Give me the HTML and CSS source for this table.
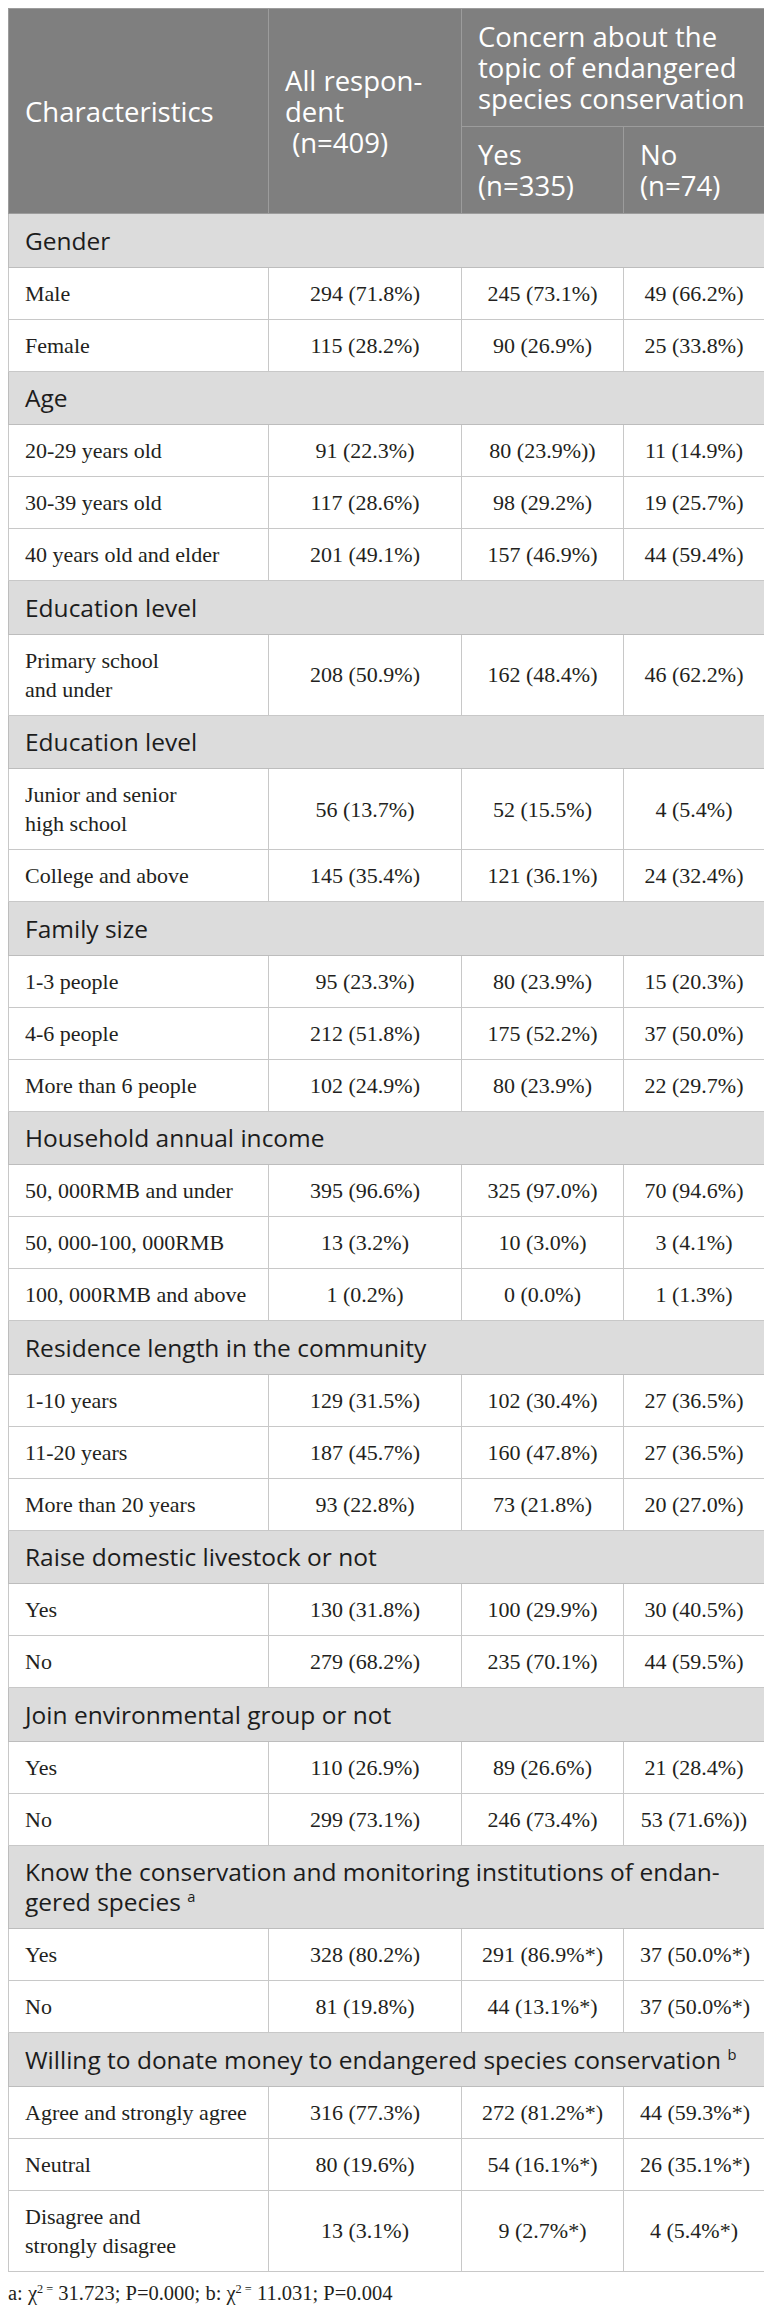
FILE: index.html
```html
<!DOCTYPE html>
<html lang="en">
<head>
<meta charset="utf-8">
<title>Characteristics of respondents</title>
<link rel="stylesheet" href="styles.css">
</head>
<body>
<table class="data">
  <colgroup>
    <col class="c1"><col class="c2"><col class="c3"><col class="c4">
  </colgroup>
  <thead>
    <tr>
      <th rowspan="2" class="h-main">Characteristics</th>
      <th rowspan="2" class="h-main">All respon-<br>dent<br>&nbsp;(n=409)</th>
      <th colspan="2" class="h-group">Concern about the<br>topic of endangered<br>species conservation</th>
    </tr>
    <tr>
      <th class="h-sub">Yes<br>(n=335)</th>
      <th class="h-sub">No<br>(n=74)</th>
    </tr>
  </thead>
  <tbody>
    <tr class="sec"><td colspan="4">Gender</td></tr>
    <tr><td>Male</td><td>294 (71.8%)</td><td>245 (73.1%)</td><td>49 (66.2%)</td></tr>
    <tr><td>Female</td><td>115 (28.2%)</td><td>90 (26.9%)</td><td>25 (33.8%)</td></tr>

    <tr class="sec"><td colspan="4">Age</td></tr>
    <tr><td>20-29 years old</td><td>91 (22.3%)</td><td>80 (23.9%))</td><td>11 (14.9%)</td></tr>
    <tr><td>30-39 years old</td><td>117 (28.6%)</td><td>98 (29.2%)</td><td>19 (25.7%)</td></tr>
    <tr><td>40 years old and elder</td><td>201 (49.1%)</td><td>157 (46.9%)</td><td>44 (59.4%)</td></tr>

    <tr class="sec"><td colspan="4">Education level</td></tr>
    <tr><td>Primary school<br>and under</td><td>208 (50.9%)</td><td>162 (48.4%)</td><td>46 (62.2%)</td></tr>

    <tr class="sec"><td colspan="4">Education level</td></tr>
    <tr><td>Junior and senior<br>high school</td><td>56 (13.7%)</td><td>52 (15.5%)</td><td>4 (5.4%)</td></tr>
    <tr><td>College and above</td><td>145 (35.4%)</td><td>121 (36.1%)</td><td>24 (32.4%)</td></tr>

    <tr class="sec"><td colspan="4">Family size</td></tr>
    <tr><td>1-3 people</td><td>95 (23.3%)</td><td>80 (23.9%)</td><td>15 (20.3%)</td></tr>
    <tr><td>4-6 people</td><td>212 (51.8%)</td><td>175 (52.2%)</td><td>37 (50.0%)</td></tr>
    <tr><td>More than 6 people</td><td>102 (24.9%)</td><td>80 (23.9%)</td><td>22 (29.7%)</td></tr>

    <tr class="sec"><td colspan="4">Household annual income</td></tr>
    <tr><td>50, 000RMB and under</td><td>395 (96.6%)</td><td>325 (97.0%)</td><td>70 (94.6%)</td></tr>
    <tr><td>50, 000-100, 000RMB</td><td>13 (3.2%)</td><td>10 (3.0%)</td><td>3 (4.1%)</td></tr>
    <tr><td>100, 000RMB and above</td><td>1 (0.2%)</td><td>0 (0.0%)</td><td>1 (1.3%)</td></tr>

    <tr class="sec"><td colspan="4">Residence length in the community</td></tr>
    <tr><td>1-10 years</td><td>129 (31.5%)</td><td>102 (30.4%)</td><td>27 (36.5%)</td></tr>
    <tr><td>11-20 years</td><td>187 (45.7%)</td><td>160 (47.8%)</td><td>27 (36.5%)</td></tr>
    <tr><td>More than 20 years</td><td>93 (22.8%)</td><td>73 (21.8%)</td><td>20 (27.0%)</td></tr>

    <tr class="sec"><td colspan="4">Raise domestic livestock or not</td></tr>
    <tr><td>Yes</td><td>130 (31.8%)</td><td>100 (29.9%)</td><td>30 (40.5%)</td></tr>
    <tr><td>No</td><td>279 (68.2%)</td><td>235 (70.1%)</td><td>44 (59.5%)</td></tr>

    <tr class="sec"><td colspan="4">Join environmental group or not</td></tr>
    <tr><td>Yes</td><td>110 (26.9%)</td><td>89 (26.6%)</td><td>21 (28.4%)</td></tr>
    <tr><td>No</td><td>299 (73.1%)</td><td>246 (73.4%)</td><td>53 (71.6%))</td></tr>

    <tr class="sec"><td colspan="4">Know the conservation and monitoring institutions of endan-<br>gered species <sup>a</sup></td></tr>
    <tr><td>Yes</td><td>328 (80.2%)</td><td>291 (86.9%*)</td><td>37 (50.0%*)</td></tr>
    <tr><td>No</td><td>81 (19.8%)</td><td>44 (13.1%*)</td><td>37 (50.0%*)</td></tr>

    <tr class="sec"><td colspan="4">Willing to donate money to endangered species conservation <sup>b</sup></td></tr>
    <tr><td>Agree and strongly agree</td><td>316 (77.3%)</td><td>272 (81.2%*)</td><td>44 (59.3%*)</td></tr>
    <tr><td>Neutral</td><td>80 (19.6%)</td><td>54 (16.1%*)</td><td>26 (35.1%*)</td></tr>
    <tr><td>Disagree and<br>strongly disagree</td><td>13 (3.1%)</td><td>9 (2.7%*)</td><td>4 (5.4%*)</td></tr>
  </tbody>
</table>
<p class="note">a: χ<sup>2 =</sup> 31.723; P=0.000; b: χ<sup>2 =</sup> 11.031; P=0.004</p>
</body>
</html>
```

FILE: styles.css
```css
html, body {
  background: #ffffff;
}

body {
  margin: 8px;
  font-family: "Liberation Serif", "Times New Roman", serif;
  color: #231f20;
}

.data {
  width: 756px;
  table-layout: fixed;
  border-collapse: collapse;
  border: 1px solid #c8c8c8;
}

.c1 { width: 260px; }
.c2 { width: 193px; }
.c3 { width: 162px; }
.c4 { width: 141px; }

.data th {
  background: #7f7f7f;
  color: #ffffff;
  font-family: "Open Sans", "Noto Sans", sans-serif;
  font-weight: 400;
  font-size: 27.5px;
  line-height: 31px;
  text-align: left;
  vertical-align: middle;
  white-space: nowrap;
  border: 1px solid #9c9c9c;
  padding: 12px 16px;
}

.data td {
  font-size: 22px;
  line-height: 29px;
  padding: 11px 16px;
  border: 1px solid #c8c8c8;
  text-align: center;
  vertical-align: middle;
  white-space: nowrap;
}

.data td:first-child {
  text-align: left;
}

.data tr.sec td {
  background: #dcdcdc;
  color: #1c1c1c;
  font-family: "Open Sans", "Noto Sans", sans-serif;
  font-size: 24.5px;
  line-height: 30px;
  padding: 11.5px 16px 11px;
  text-align: left;
  border-color: #bdbdbd;
}

.data tr.sec sup {
  font-size: 0.6em;
  line-height: 0;
  vertical-align: 0.6em;
}

.note {
  margin: 8px 0 0;
  font-size: 20.5px;
  line-height: 26px;
  color: #231f20;
}

.note sup {
  font-size: 0.6em;
  line-height: 0;
  vertical-align: 0.6em;
}
```
